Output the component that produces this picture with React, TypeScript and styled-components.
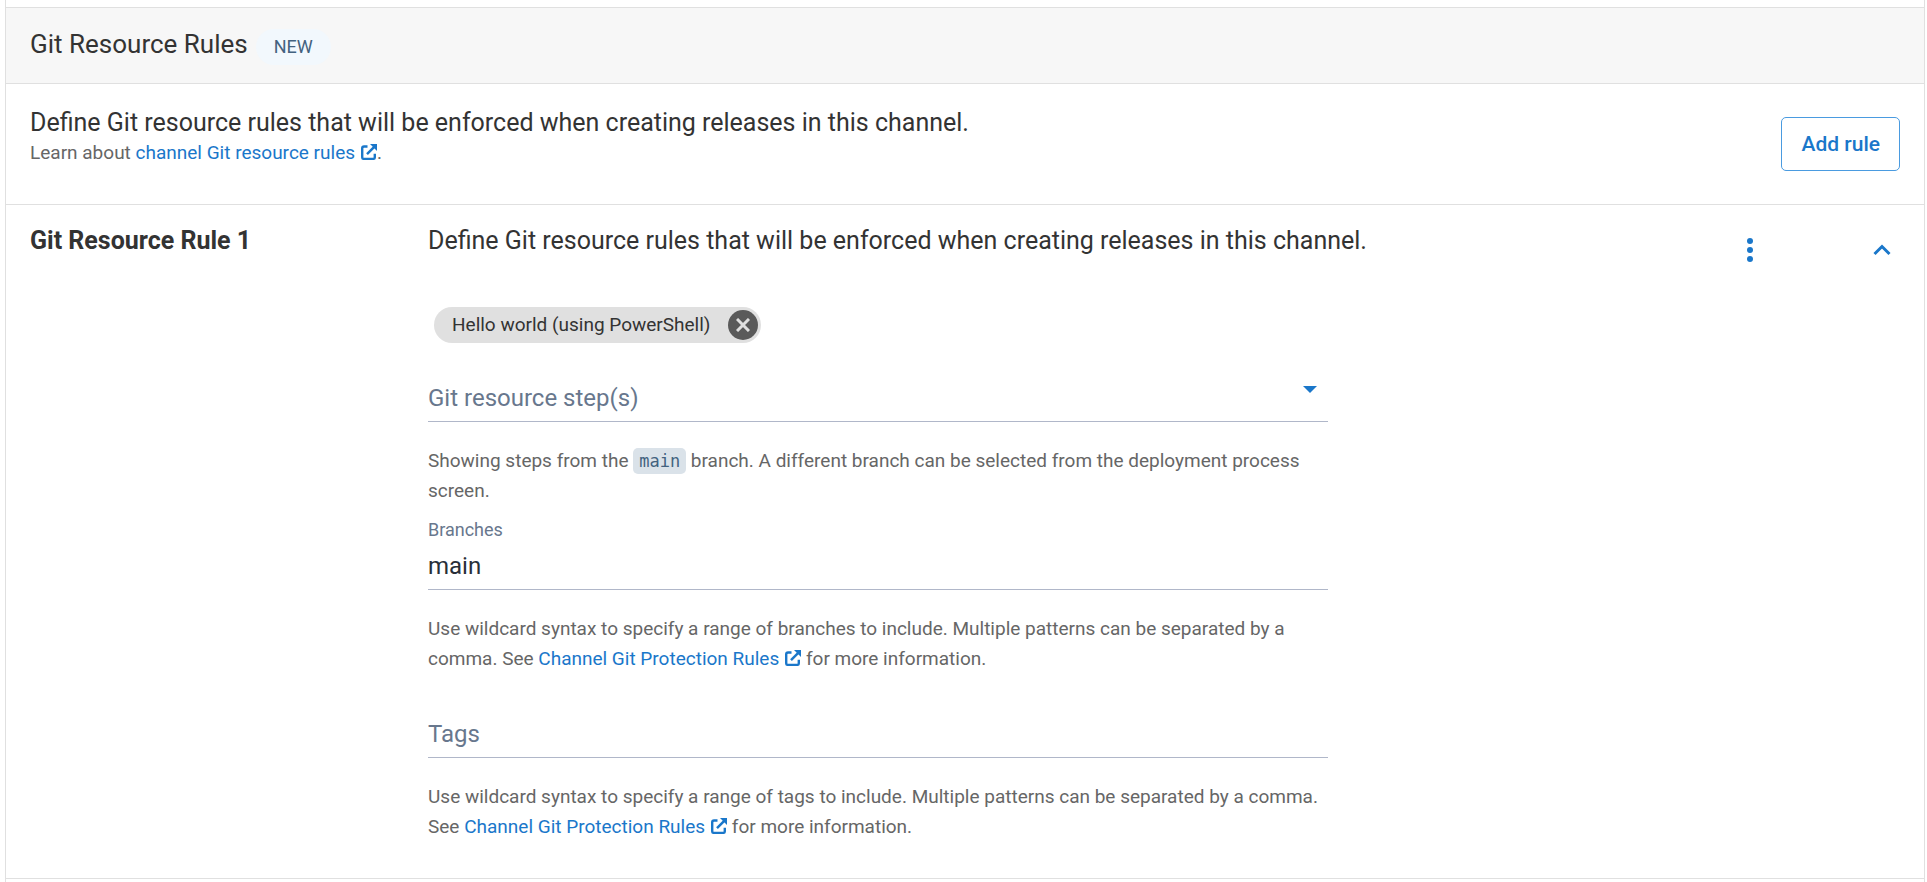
import React from "react";
import styled, { createGlobalStyle } from "styled-components";

const blue = "#1a77ca";
const line = "#e0e0e0";

const GlobalStyle = createGlobalStyle`
  *, *::before, *::after { box-sizing: border-box; }
  html, body, #root { min-height: 100%; }
  body {
    margin: 0;
    background: #fff;
    color: #333;
    font-family: Roboto, "Liberation Sans", sans-serif;
    font-size: 18px;
    line-height: 30px;
  }
  h2, h3, p { margin: 0; }
  button, input, select { font: inherit; }
`;

const Page = styled.main`
  padding: 0 2px 0 5px;
`;

const Panel = styled.div`
  padding-top: 7px;
  border: 1px solid ${line};
  border-width: 0 1px;
  min-height: 100vh;
`;

const PanelHeader = styled.header`
  display: flex;
  align-items: center;
  gap: 8px;
  height: 77px;
  padding: 0 24px;
  background: #f7f7f7;
  border: 1px solid ${line};
  border-width: 1px 0;
`;

const PanelTitle = styled.h2`
  font-size: 26px;
  font-weight: 400;
  line-height: 36px;
  padding-bottom: 4px;
`;

const Badge = styled.span`
  padding: 3px 18px;
  margin-top: 2px;
  border-radius: 18px;
  background: #f2f8fd;
  color: #43627f;
`;

const Section = styled.section`
  display: flex;
  border-bottom: 1px solid ${line};
`;

const Intro = styled(Section)`
  align-items: center;
  justify-content: space-between;
  padding: 24px;
`;

const IntroText = styled.div`
  padding-bottom: 12px;
`;

const Lead = styled.p`
  font-size: 25px;
`;

const Note = styled.p`
  color: #666;
  font-size: 19px;
`;

const Link = styled.a`
  color: ${blue};
  text-decoration: none;
`;

const LinkIcon = styled.svg`
  width: 16px;
  height: 16px;
  margin-left: 6px;
  vertical-align: -1px;
`;

const AddButton = styled.button`
  height: 54px;
  padding: 0 19px;
  border: 1px solid #4a9be0;
  border-radius: 5px;
  background: #fff;
  color: ${blue};
  font-size: 21px;
  font-weight: 500;
`;

const Rule = styled(Section)`
  padding: 21px 24px 36px;
`;

const RuleTitle = styled.h3`
  flex: 0 0 398px;
  font-size: 25px;
  font-weight: 700;
`;

const RuleBody = styled.div`
  flex: 1;
`;

const RuleForm = styled.div`
  max-width: 900px;
  padding-top: 51px;
`;

const RuleActions = styled.div`
  display: flex;
  gap: 96px;
  height: 48px;
`;

const IconButton = styled.button`
  display: grid;
  place-items: center;
  width: 36px;
  height: 48px;
  padding: 0;
  border: 0;
  background: none;
  color: ${blue};
`;

const Chip = styled.div`
  display: flex;
  align-items: center;
  gap: 18px;
  width: fit-content;
  height: 36px;
  margin-left: 6px;
  padding: 0 3px 0 18px;
  border-radius: 18px;
  background: #e0e0e0;
  font-size: 19px;
`;

const ChipRemove = styled.button`
  display: grid;
  place-items: center;
  width: 30px;
  height: 30px;
  padding: 0;
  border: 0;
  border-radius: 50%;
  background: #5a5a5a;
  color: #e0e0e0;
`;

const Field = styled.div<{ $gap: number }>`
  margin-top: ${(p) => p.$gap}px;
`;

const FieldLabel = styled.label`
  display: block;
  color: #68778d;
`;

const controlStyles = `
  display: block;
  width: 100%;
  height: 45px;
  padding: 0 0 3px;
  border: 0;
  border-bottom: 1px solid #b0b7c9;
  border-radius: 0;
  background: none;
  font-size: 24px;
  line-height: 36px;
`;

const TextInput = styled.input`
  ${controlStyles}
  color: #282f38;
  &::placeholder { color: #68778d; opacity: 1; }
`;

const SelectWrap = styled.div`
  position: relative;
`;

const Select = styled.select`
  ${controlStyles}
  appearance: none;
  color: #68778d;
`;

const SelectArrow = styled.svg`
  position: absolute;
  top: 9px;
  right: 11px;
  width: 14px;
  height: 7px;
  pointer-events: none;
`;

const Help = styled(Note)`
  margin-top: 24px;
`;

const Code = styled.code`
  padding: 3px 6px;
  border-radius: 5px;
  background: #dae2e9;
  color: #43627f;
  font-family: "DejaVu Sans Mono", monospace;
  font-size: 17px;
`;

function External() {
  return (
    <LinkIcon viewBox="0 0 16 16" fill="none" stroke="currentColor" aria-hidden="true">
      <path d="M6.500 2.500H3C2 2.500 1.200 3.300 1.200 4.200v9c0 1 .8 1.700 1.800 1.700h9c1 0 1.800-.7 1.800-1.700V9.800" strokeWidth="2.400" />
      <path d="M6 10.200 13 3.200" strokeWidth="2.500" />
      <path d="M9 0H16v7z" fill="currentColor" stroke="none" />
    </LinkIcon>
  );
}

function DocLink({ children }: { children: React.ReactNode }) {
  return (
    <Link href="#docs">
      {children}
      <External />
    </Link>
  );
}

export default function App() {
  return (
    <Page>
      <GlobalStyle />
      <Panel>
        <PanelHeader>
          <PanelTitle>Git Resource Rules</PanelTitle>
          <Badge>NEW</Badge>
        </PanelHeader>

        <Intro>
          <IntroText>
            <Lead>Define Git resource rules that will be enforced when creating releases in this channel.</Lead>
            <Note>
              Learn about <DocLink>channel Git resource rules</DocLink>.
            </Note>
          </IntroText>
          <AddButton type="button">Add rule</AddButton>
        </Intro>

        <Rule>
          <RuleTitle>Git Resource Rule 1</RuleTitle>
          <RuleBody>
            <Lead>Define Git resource rules that will be enforced when creating releases in this channel.</Lead>
            <RuleForm>
              <Chip>
                Hello world (using PowerShell)
                <ChipRemove type="button" aria-label="Remove Hello world (using PowerShell)">
                  <svg width="14" height="14" viewBox="0 0 14 14" stroke="currentColor" strokeWidth="3" aria-hidden="true">
                    <path d="M1 1l12 12M13 1L1 13" />
                  </svg>
                </ChipRemove>
              </Chip>

              <Field $gap={34}>
                <SelectWrap>
                  <Select aria-label="Git resource step(s)" defaultValue="">
                    <option value="">Git resource step(s)</option>
                  </Select>
                  <SelectArrow viewBox="0 0 14 7" aria-hidden="true">
                    <path d="M0 0h14L7 7z" fill={blue} />
                  </SelectArrow>
                </SelectWrap>
                <Help>
                  Showing steps from the <Code>main</Code> branch. A different branch can be selected from the
                  deployment process screen.
                </Help>
              </Field>

              <Field $gap={9}>
                <FieldLabel htmlFor="branches">Branches</FieldLabel>
                <TextInput id="branches" defaultValue="main" />
                <Help>
                  Use wildcard syntax to specify a range of branches to include. Multiple patterns can be separated by
                  a comma. See <DocLink>Channel Git Protection Rules</DocLink> for more information.
                </Help>
              </Field>

              <Field $gap={39}>
                <TextInput aria-label="Tags" placeholder="Tags" />
                <Help>
                  Use wildcard syntax to specify a range of tags to include. Multiple patterns can be separated by a
                  comma. See <DocLink>Channel Git Protection Rules</DocLink> for more information.
                </Help>
              </Field>
            </RuleForm>
          </RuleBody>
          <RuleActions>
            <IconButton type="button" aria-label="Rule actions">
              <svg width="6" height="24" viewBox="0 0 6 24" fill="currentColor" aria-hidden="true">
                <circle cx="3" cy="3" r="3" />
                <circle cx="3" cy="12" r="3" />
                <circle cx="3" cy="21" r="3" />
              </svg>
            </IconButton>
            <IconButton type="button" aria-label="Collapse rule">
              <svg width="18" height="12" viewBox="0 0 18 12" fill="none" stroke="currentColor" strokeWidth="3" aria-hidden="true">
                <path d="M1.500 10 9 2.500 16.500 10" />
              </svg>
            </IconButton>
          </RuleActions>
        </Rule>
      </Panel>
    </Page>
  );
}
